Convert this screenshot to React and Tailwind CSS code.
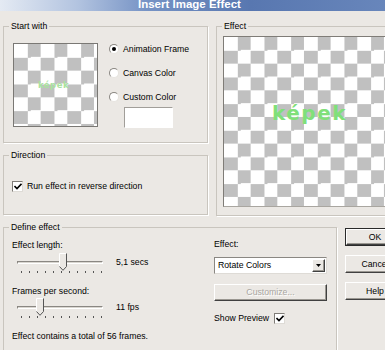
import React from 'react';

const checker =
  'bg-[image:conic-gradient(#c0c0c0_25%,#fff_0_50%,#c0c0c0_0_75%,#fff_0)] bg-[length:26.667px_26.667px]';

const raised =
  'border border-t-white border-l-white border-r-[#404040] border-b-[#404040] shadow-[inset_-1px_-1px_0_#9a9791]';

function Group({ label, className, children }) {
  return (
    <fieldset className={`border border-[#c9c5be] shadow-[1px_1px_0_#fff] ${className}`}>
      <legend className="ml-[5px] px-[2px] leading-[12px]">{label}</legend>
      {children}
    </fieldset>
  );
}

function Radio({ checked, label }) {
  return (
    <div className="flex items-center h-[12px]">
      <span className="w-[10px] h-[10px] rounded-full bg-white border border-t-[#8a8782] border-l-[#8a8782] border-r-[#e6e3de] border-b-[#e6e3de] flex items-center justify-center">
        {checked && <span className="w-[4px] h-[4px] rounded-full bg-black" />}
      </span>
      <span className="ml-[4px] whitespace-nowrap">{label}</span>
    </div>
  );
}

function Checkbox() {
  return (
    <span className="w-[11px] h-[11px] bg-white border border-t-[#7f7c77] border-l-[#7f7c77] border-r-[#dedbd6] border-b-[#dedbd6] flex items-center justify-center">
      <svg width="8" height="7" viewBox="0 0 8 7">
        <path d="M0.5 3 L3 5.5 L7.5 0.8" fill="none" stroke="#000" strokeWidth="1.6" />
      </svg>
    </span>
  );
}

function Slider({ thumb }) {
  const ticks = Array.from({ length: 11 }, (_, i) => i);
  return (
    <div className="w-[96px]">
      <div className="relative h-[19px] pt-[9px]">
        <div className="ml-[5px] w-[86px] h-[3px] border border-t-[#8a8782] border-l-[#8a8782] border-r-white border-b-white bg-[#d9d6d0]" />
        <svg
          className="absolute top-[1px]"
          style={{ left: thumb }}
          width="8"
          height="18"
          viewBox="0 0 8 18"
        >
          <path d="M0.5 17 V0.5 H7.5 V13.5 L4 17.5" fill="#ebe8e4" stroke="none" />
          <path d="M0.5 13.5 V0.5 H7" fill="none" stroke="#fff" />
          <path d="M7.5 0.5 V13.5 L4 17.3 L0.5 13.5" fill="none" stroke="#555" />
        </svg>
      </div>
      <div className="flex gap-[7px] pl-[9px]">
        {ticks.map((t) => (
          <span key={t} className="w-[1px] h-[2px] bg-[#555]" />
        ))}
      </div>
    </div>
  );
}

export default function App() {
  return (
    <div className="w-[385px] h-[350px] overflow-hidden bg-[#ebe8e4] text-black font-['Liberation_Sans',Arial,sans-serif] text-[8.7px] leading-[11px]">
      <div className="h-[11px] overflow-hidden bg-[linear-gradient(90deg,#e4eaf3_0%,#b3c4e0_20%,#7693c5_38%,#5877b0_65%,#6886bb_100%)] pl-[138px]">
        <span className="relative -top-[1px] text-[11.5px] leading-[11px] font-bold text-white whitespace-nowrap">
          Insert Image Effect
        </span>
      </div>

      <div className="w-[420px] pl-[3px]">
        <div className="flex mt-[9px]">
          <div className="w-[205px] flex flex-col">
            <Group label="Start with" className="h-[123px]">
              <div className="flex pt-[11px] pl-[9px]">
                <div className={`w-[85px] h-[84px] border border-[#7a7874] ${checker} flex items-center justify-center`}>
                  <span className="-ml-[4px] font-['DejaVu_Sans',sans-serif] font-bold text-[8.5px] tracking-[0.5px] text-[#a9e29f]">
                    képek
                  </span>
                </div>
                <div className="ml-[11px] flex flex-col gap-[12px]">
                  <Radio checked label="Animation Frame" />
                  <Radio label="Canvas Color" />
                  <div>
                    <Radio label="Custom Color" />
                    <div className="ml-[15px] mt-[4px] w-[49px] h-[21px] bg-white border border-t-[#a19e99] border-l-[#a19e99] border-r-white border-b-white" />
                  </div>
                </div>
              </div>
            </Group>

            <Group label="Direction" className="mt-[6px] h-[66px]">
              <div className="flex items-center pt-[20px] pl-[8px]">
                <Checkbox />
                <span className="ml-[4px]">Run effect in reverse direction</span>
              </div>
            </Group>
          </div>

          <Group label="Effect" className="ml-[8px] h-[196px] w-[200px] shrink-0">
            <div className="pt-[4px] pl-[6px]">
              <div className={`w-[188px] h-[171px] border border-t-[#7f7c77] border-l-[#7f7c77] border-r-[#a9a6a0] border-b-[#a9a6a0] ${checker} flex justify-start pl-[48px] pt-[66px]`}>
                <span className="font-['DejaVu_Sans',sans-serif] font-bold text-[20px] leading-[20px] tracking-[1.5px] text-[#80e07a] h-[20px]">
                  képek
                </span>
              </div>
            </div>
          </Group>
        </div>

        <div className="flex mt-[5px]">
          <Group label="Define effect" className="w-[334px] h-[140px] shrink-0">
            <div className="flex">
              <div className="w-[210px] pl-[8px] pt-[7px]">
                <div>Effect length:</div>
                <div className="flex mt-[1px]">
                  <Slider thumb={47} />
                  <span className="ml-[8px] mt-[5px]">5,1 secs</span>
                </div>
                <div className="mt-[13px]">Frames per second:</div>
                <div className="flex">
                  <Slider thumb={24} />
                  <span className="ml-[8px] mt-[5px]">11 fps</span>
                </div>
                <div className="mt-[13px] whitespace-nowrap">Effect contains a total of 56 frames.</div>
              </div>

              <div className="w-[113px] pt-[6px]">
                <div>Effect:</div>
                <div className="mt-[7px] h-[17px] bg-white border border-t-[#8a8782] border-l-[#8a8782] border-r-[#dedbd6] border-b-[#dedbd6] flex items-center">
                  <span className="flex-1 pl-[3px]">Rotate Colors</span>
                  <span className={`mr-[1px] w-[13px] h-[13px] bg-[#ebe8e4] ${raised} flex items-center justify-center`}>
                    <svg width="5" height="3" viewBox="0 0 5 3">
                      <path d="M0 0 H5 L2.5 3 Z" fill="#000" />
                    </svg>
                  </span>
                </div>
                <div className={`mt-[10px] h-[17px] ${raised} flex items-center justify-center text-[#a9a6a1] [text-shadow:1px_1px_0_#fff]`}>
                  Customize...
                </div>
                <div className="mt-[12px] flex items-center">
                  <span>Show Preview</span>
                  <span className="ml-[5px]">
                    <Checkbox />
                  </span>
                </div>
              </div>
            </div>
          </Group>

          <div className="ml-[8px] mt-[7px] w-[60px] shrink-0 flex flex-col gap-[9px]">
            <div className="h-[18px] border border-[#2a2a2a] flex">
              <div className={`flex-1 ${raised} flex items-center justify-center`}>OK</div>
            </div>
            <div className={`h-[18px] ${raised} flex items-center justify-center`}>Cancel</div>
            <div className={`h-[18px] ${raised} flex items-center justify-center`}>Help</div>
          </div>
        </div>
      </div>
    </div>
  );
}
